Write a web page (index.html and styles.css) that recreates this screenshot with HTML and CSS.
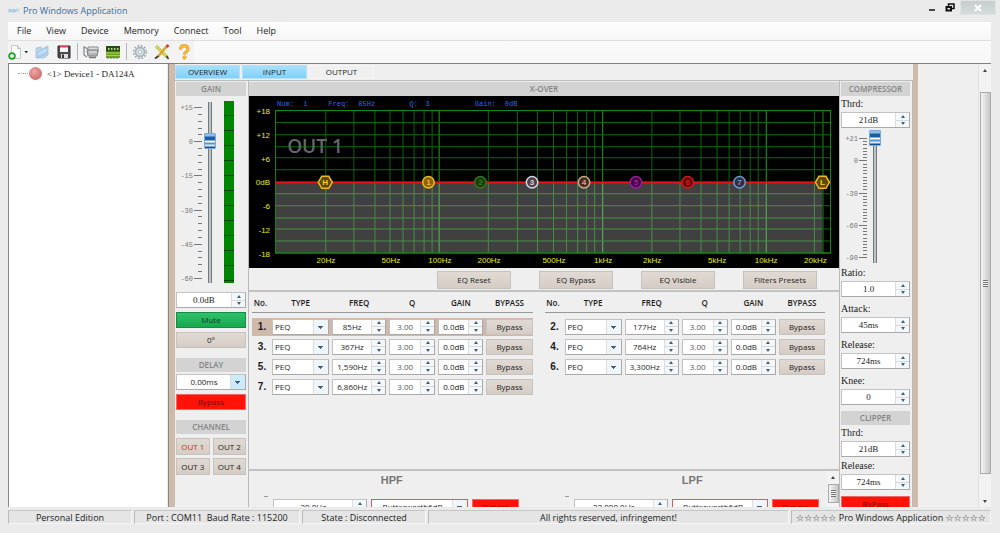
FILE: index.html
```html
<!DOCTYPE html>
<html lang="en">
<head>
<meta charset="utf-8">
<title>Pro Windows Application</title>
<link rel="stylesheet" href="styles.css">
</head>
<body>
<header class="titlebar">
  <svg class="logo" viewBox="0 0 12 8" width="12" height="8"><path d="M1 2.500h2v2.500H1zM4.500 2.500h2v2.500h-2zM7 5l1.500-3L10 5M10.500 2h1" fill="none" stroke="#8fc3de"/></svg>
  <h1>Pro Windows Application</h1>
  <div class="win-buttons">
    <button class="win" aria-label="Minimize"><svg viewBox="0 0 10 10" width="10" height="10"><path d="M2 7h6" stroke="#111" stroke-width="1.500"/></svg></button>
    <button class="win" aria-label="Restore"><svg viewBox="0 0 10 10" width="10" height="10"><path d="M3.500 3V1h5.500v4.500H7" fill="none" stroke="#111" stroke-width="1.500"/><path d="M1.500 4h4.500v3.500H1.500z" fill="none" stroke="#111" stroke-width="2"/></svg></button>
    <button class="win close" aria-label="Close"><svg viewBox="0 0 10 8" width="10" height="8"><path d="M2 1l6 6M8 1L2 7" stroke="#fff" stroke-width="2"/></svg></button>
  </div>
</header>
<div class="frame">
  <nav class="menubar">
    <button>File</button><button>View</button><button>Device</button><button>Memory</button><button>Connect</button><button>Tool</button><button>Help</button>
  </nav>
  <div class="toolbar">
    <div class="tools">
      <button aria-label="New"><svg viewBox="0 0 20 16" width="20" height="16"><path d="M3.500 1.500h6l3 3v10h-9z" fill="#fff" stroke="#c3c8c8"/><path d="M9.500 1.500v3h3" fill="#e3e8e8" stroke="#b5baba"/><circle cx="4" cy="12" r="3.500" fill="#2fae34" stroke="#168a1c" stroke-width=".6"/><path d="M4 10v4M2 12h4" stroke="#fff" stroke-width="1.300"/><path d="M16.500 7h3.500l-1.750 2.300z" fill="#222"/></svg></button>
      <button aria-label="Open"><svg viewBox="0 0 16 16" width="16" height="16"><path d="M2 4l5-1 1 2 4-2 2-1v9l-4 3H2z" fill="#b9d4ea" stroke="#a1b8cb" stroke-width=".7"/><path d="M4 7l10-4-2 8-9 3.500z" fill="#a3cbec"/><path d="M5 8l8-4-1 4-8 4z" fill="#c0dff6"/></svg></button>
      <button aria-label="Save"><svg viewBox="0 0 16 16" width="16" height="16"><path d="M2 2h12v12H3l-1-1z" fill="#4b4b50" stroke="#2e2e33"/><path d="M4 2h8v6H4z" fill="#f5f5f5"/><path d="M4 2h8v1.500H4z" fill="#df4b4b"/><path d="M5 10h7v4H5z" fill="#ddd"/><path d="M6 10.500h2V14H6z" fill="#333"/></svg></button>
      <i class="sep"></i>
      <button aria-label="Print"><svg viewBox="0 0 16 16" width="16" height="16"><path d="M1 2v9l3 2M1 3l4 2" fill="none" stroke="#888" stroke-width="1.200"/><path d="M5 3h10v5H5z" fill="#d9dcdc" stroke="#8b8f8f"/><path d="M4 6h11l-1 6H5z" fill="#b3b7b7" stroke="#7c8080"/><path d="M6 13.500h7" stroke="#777" stroke-width="1.500"/><path d="M6 8h8" stroke="#eee"/></svg></button>
      <button aria-label="Device board"><svg viewBox="0 0 16 16" width="16" height="16"><path d="M1 2h14v12H1z" fill="#6f9f2c"/><path d="M1 2h14v5.500H1z" fill="#244d16"/><path d="M3 4h1.500v2H3zM6 4h1.500v2H6zM9 4h1.500v2H9zM12 4h1.500v2H12z" fill="#b8d477"/><path d="M1 9h14M1 11.500h14" stroke="#a9cf4a"/><path d="M3 13v2M6 13v2M9 13v2M12 13v2" stroke="#6b7434"/></svg></button>
      <i class="sep"></i>
      <button aria-label="Settings"><svg viewBox="0 0 16 16" width="16" height="16"><circle cx="8" cy="8" r="6.400" fill="none" stroke="#9baab0" stroke-width="1.600" stroke-dasharray="1.700 1.650"/><circle cx="8" cy="8" r="4.500" fill="#e3e9eb" stroke="#a7b4b9" stroke-width="1.800"/><circle cx="8" cy="8" r="1.900" fill="#fafafa" stroke="#98a6ab" stroke-width=".8"/></svg></button>
      <button aria-label="Design"><svg viewBox="0 0 16 16" width="16" height="16"><path d="M2 2l11.500 11.500" stroke="#a9b02a" stroke-width="3"/><path d="M2 2l11.500 11.500" stroke="#e8e65f" stroke-width="1.400"/><path d="M13 2L4 12.500" stroke="#e0a626" stroke-width="2.600"/><path d="M14.500 1l-2 2" stroke="#cf3d36" stroke-width="2.600"/><path d="M4.500 12L1 14.500" stroke="#39302c" stroke-width="1.600"/><path d="M12.500 12l2 3" stroke="#38352b" stroke-width="1.400"/></svg></button>
      <button aria-label="Help"><svg viewBox="0 0 16 16" width="16" height="16"><path d="M4.500 5.500C4.500 2.500 6 1.800 8 1.800s4 1 4 3.200-1.500 2.800-2.500 3.500-1 1-1 2" fill="none" stroke="#d9921a" stroke-width="3"/><path d="M4.500 5.300C4.500 2.500 6 1.800 8 1.800s4 1 4 3.200-1.500 2.800-2.500 3.500-1 1-1 2" fill="none" stroke="#fdc12f" stroke-width="1.800"/><circle cx="8.500" cy="13.500" r="1.700" fill="#fdc12f" stroke="#d9921a" stroke-width=".6"/></svg></button>
    </div>
  </div>
  <div class="workspace">
    <aside class="tree">
      <div class="node"><i class="branch"></i><i class="dot"></i><span>&lt;1&gt; Device1 - DA124A</span></div>
    </aside>
    <main class="main">
      <i class="edge wide"></i>
      <div class="content">
        <div class="tabs" role="tablist">
          <button role="tab" class="tab on">OVERVIEW</button><button role="tab" class="tab on">INPUT</button><button role="tab" class="tab">OUTPUT</button>
        </div>
        <div class="columns">
          <section class="gain">
            <h2>GAIN</h2>
            <div class="fader">
              <svg class="scale" id="gain-scale" viewBox="0 0 27 190" width="27" height="190"></svg>
              <input class="slider" type="range" min="-60" max="15" value="0" aria-label="Gain">
              <div class="meter"></div>
            </div>
            <div class="spin"><input value="0.0dB" class="mono" aria-label="Gain value"><span><button aria-label="Up"></button><button aria-label="Down"></button></span></div>
            <button class="btn green">Mute</button>
            <button class="btn">0°</button>
            <h2 class="spaced">DELAY</h2>
            <div class="drop hot"><select aria-label="Delay"><option>0.00ms</option></select></div>
            <button class="btn red">Bypass</button>
            <h2 class="spaced">CHANNEL</h2>
            <div class="outs"><button class="btn active">OUT 1</button><button class="btn">OUT 2</button><button class="btn">OUT 3</button><button class="btn">OUT 4</button></div>
          </section>
          <section class="xover">
            <h2>X-OVER</h2>
            <svg class="graph" id="graph" viewBox="249 96 588 171"></svg>
            <div class="actions"><button class="btn">EQ Reset</button><button class="btn">EQ Bypass</button><button class="btn">EQ Visible</button><button class="btn">Filters Presets</button></div>
            <div class="eq"><div class="bands" id="odd"></div><div class="bands" id="even"></div></div>
            <div class="filters">
              <div class="filter"><h3>HPF</h3><div class="filter-row"><div class="spin"><input value="20.0Hz" aria-label="HPF frequency"><span><button aria-label="Up"></button><button aria-label="Down"></button></span></div><div class="drop alert"><select aria-label="HPF slope"><option>Butterworth6dB</option></select></div><button class="btn red">Bypass</button></div></div>
              <div class="filter"><h3>LPF</h3><div class="filter-row"><div class="spin"><input value="22,000.0Hz" aria-label="LPF frequency"><span><button aria-label="Up"></button><button aria-label="Down"></button></span></div><div class="drop alert"><select aria-label="LPF slope"><option>Butterworth6dB</option></select></div><button class="btn red">Bypass</button></div></div>
              <div class="mini-scroll"><i class="up"></i><b></b></div>
            </div>
          </section>
          <section class="dyn">
            <h2>COMPRESSOR</h2>
            <label for="c1">Thrd:</label>
            <div class="spin"><input id="c1" class="mono" value="21dB"><span><button aria-label="Up"></button><button aria-label="Down"></button></span></div>
            <div class="fader short">
              <svg class="scale" id="comp-scale" viewBox="0 0 27 138" width="27" height="138"></svg>
              <input class="slider" type="range" min="-90" max="21" value="21" aria-label="Threshold">
            </div>
            <label for="c2">Ratio:</label>
            <div class="spin gap"><input id="c2" class="mono" value="1.0"><span><button aria-label="Up"></button><button aria-label="Down"></button></span></div>
            <label for="c3">Attack:</label>
            <div class="spin gap"><input id="c3" class="mono" value="45ms"><span><button aria-label="Up"></button><button aria-label="Down"></button></span></div>
            <label for="c4">Release:</label>
            <div class="spin gap"><input id="c4" class="mono" value="724ms"><span><button aria-label="Up"></button><button aria-label="Down"></button></span></div>
            <label for="c5">Knee:</label>
            <div class="spin gap"><input id="c5" class="mono" value="0"><span><button aria-label="Up"></button><button aria-label="Down"></button></span></div>
            <h2>CLIPPER</h2>
            <label for="c6">Thrd:</label>
            <div class="spin"><input id="c6" class="mono" value="21dB"><span><button aria-label="Up"></button><button aria-label="Down"></button></span></div>
            <label for="c7" class="tall">Release:</label>
            <div class="spin"><input id="c7" class="mono" value="724ms"><span><button aria-label="Up"></button><button aria-label="Down"></button></span></div>
            <button class="btn red last">ByPass</button>
          </section>
        </div>
      </div>
      <i class="edge"></i>
      <div class="blank"></div>
      <div class="scrollbar"><i class="up"></i><b></b><i class="down"></i></div>
    </main>
  </div>
</div>
<footer class="status">
  <span class="s1">Personal Edition</span><span class="s2">Port : COM11&nbsp; Baud Rate : 115200</span><span class="s3">State : Disconnected</span><span class="s4">All rights reserved, infringement!</span><span class="s5">☆☆☆☆☆ Pro Windows Application ☆☆☆☆☆</span>
</footer>
<script src="app.js"></script>
</body>
</html>
```
FILE: styles.css
```css
* { box-sizing: border-box; }
html, body { height: 100%; }
body { margin: 0; display: flex; flex-direction: column; background: #ebebeb; color: #1c1c1c; font: 8px/12px "Open Sans", "DejaVu Sans", sans-serif; overflow: hidden; }
button, input, select { font: inherit; color: inherit; margin: 0; padding: 0; border: 0; border-radius: 0; background: none; min-width: 0; }
h1, h2, h3 { margin: 0; font: inherit; }
svg { display: block; flex: none; }

.titlebar { display: flex; align-items: center; height: 22px; flex: none; padding-left: 8px; gap: 3px; }
.titlebar h1 { font-size: 9px; color: #3b6f98; flex: 1; }
.win-buttons { display: flex; align-self: flex-start; align-items: center; padding-right: 4px; }
.win { width: 18px; height: 15px; display: grid; place-items: center; }
.win.close { width: 36px; margin-left: 1px; background: linear-gradient(#c7cecd, #d3dddb); border: 1px solid #dfe3e3; }

.frame { flex: 1; min-height: 0; margin: 0 9px 0 8px; display: flex; flex-direction: column; }
.menubar { display: flex; height: 19px; padding-left: 9px; gap: 15px; flex: none; background: linear-gradient(#fff, #f6f6f6); border-bottom: 1px solid #e0e0e0; font-size: 9px; align-items: center; }
.toolbar { height: 23px; flex: none; background: linear-gradient(#fafafa, #f7f7f7); border-bottom: 1px solid #808080; }
.tools { display: flex; align-items: center; gap: 6px; height: 21px; width: max-content; background: #f3f3f3; padding-right: 2px; }
.sep { width: 1px; height: 17px; background: #b5b5b5; margin: 0 -1px; }

.workspace { flex: 1; min-height: 0; display: flex; }
.tree { width: 159px; flex: none; background: #fff; border: 1px solid #888; border-width: 0 0 0 1px; margin-right: 1px; }
.node { display: flex; align-items: center; gap: 1px; padding: 3px 0 0 9px; font: 9px/12px "Liberation Serif", serif; }
.branch { width: 10px; border-top: 1px dotted #999; }
.dot { width: 13px; height: 13px; border-radius: 50%; background: radial-gradient(circle at 40% 35%, #efa7a5, #cf7170 70%, #c88); margin-right: 4px; }
.main { flex: 1; min-width: 0; display: flex; background: #efefef; border-left: 1px solid #888; overflow: hidden; }
.edge { width: 5px; flex: none; background: #cfbaab; }
.edge.wide { width: 6px; }
.content { flex: 1; min-width: 0; display: flex; flex-direction: column; }
.blank { width: 60px; flex: none; }

.scrollbar { width: 13px; flex: none; display: flex; flex-direction: column; align-items: center; border-left: 1px solid #e0e0e0; padding: 5px 0 4px; background: #f2f2f2; }
.scrollbar b, .mini-scroll b { width: 11px; border: 1px solid #aaa; background: linear-gradient(90deg, #f5f5f5, #c6c6c6); display: grid; place-items: center; }
.scrollbar b { flex: 1; margin: 20px 0 26px; }
.scrollbar b::after, .mini-scroll b::after { content: ""; width: 5px; height: 7px; background: repeating-linear-gradient(#777 0 1px, #eee 1px 2px); }
.up, .down { border: 2px solid transparent; border-bottom: 3px solid #444; border-top: 0; width: 4px; flex: none; }
.down { border-top: 3px solid #444; border-bottom: 0; }

.tabs { display: flex; gap: 2px; height: 17px; flex: none; padding: 1px 0; border-bottom: 1px solid #bbb; }
.tab { width: 65px; border: 1px solid #f5f5f5; background: #f0f0f0; line-height: 12px; }
.tab.on { background: linear-gradient(#a9e0fc, #80d1f9); border-color: #b9dff2; }

.columns { flex: 1; min-height: 0; display: grid; grid-template-columns: 73px minmax(0, 1fr) 73px; }
.columns > section { min-width: 0; min-height: 0; padding-top: 1px; overflow: hidden; }
h2 { background: #d3d3d3; color: #858585; font-weight: 600; text-align: center; height: 14px; line-height: 14px; flex: none; }
.gain { display: flex; flex-direction: column; padding: 0 2px 0 1px; }
.spaced { margin: 10px 0 -2px; }
.gain > .btn, .gain > .drop { margin-top: 4px; }
.fader { display: flex; height: 196px; padding-top: 3px; flex: none; }
.scale text { font: 7px "Liberation Mono", monospace; fill: #777; text-anchor: end; }
.scale path { stroke: #777; fill: none; }
.slider { appearance: none; writing-mode: vertical-lr; direction: rtl; width: 12px; height: 187px; margin-left: 1px; background: linear-gradient(90deg, #777 0 1px, #b6c6c9 1px 3px, #777 3px) center / 4px 181px no-repeat; flex: none; }
.slider::-webkit-slider-thumb { appearance: none; width: 12px; height: 16px; background: linear-gradient(#8fbfe9 0 2px, #1c5ca6 3px 6px, #fff 7px 8px, #5a92cb 9px 10px, #d8ebfa 11px 12px, #174f98 13px); border: 1px solid #79a9da; border-radius: 1px; }
.meter { width: 10px; height: 182px; margin: 2px 0 0 8px; background: repeating-linear-gradient(#008500 0 14px, #004500 14px 15px); }
.fader.short { height: 137px; padding-top: 2px; }
.short .slider { height: 135px; background-size: 4px 131px; }

.spin, .drop { display: flex; height: 16px; flex: none; background: #fff; border: 1px solid #c2c2c2; border-right-color: #a9a9a9; border-bottom-color: #a9a9a9; min-width: 0; }
.spin input { flex: 1; width: 0; text-align: center; line-height: 14px; }
.spin .mono { font-family: "Liberation Serif", serif; font-size: 9px; }
.spin > span { width: 14px; display: flex; flex-direction: column; border-left: 1px solid #ddd; background: #f5f8fa; }
.spin button { flex: 1; display: grid; place-items: center; }
.spin button + button { border-top: 1px solid #d8d8d8; }
.spin button::after { content: ""; border: 2px solid transparent; border-top: 0; border-bottom: 3px solid #3f5f7c; }
.spin button + button::after { border-top: 3px solid #3f5f7c; border-bottom: 0; }
.drop { position: relative; }
.drop select { appearance: none; width: 100%; padding: 0 16px 0 2px; outline: 0; line-height: 12px; }
.drop::after { content: ""; position: absolute; inset: 0 0 0 auto; width: 14px; border-left: 1px solid #ddd; pointer-events: none; background-color: #eff5f8; background-image: linear-gradient(#3f5f7c, #3f5f7c), linear-gradient(#3f5f7c, #3f5f7c), linear-gradient(#3f5f7c, #3f5f7c); background-size: 5px 1px, 3px 1px, 1px 1px; background-position: 4px 6px, 5px 7px, 6px 8px; background-repeat: no-repeat; }
.drop.hot::after { background-color: #cdeafb; }
.drop.hot select { text-align: center; padding: 0 14px 0 0; }
.drop.alert { border: 1px solid #e05858; }
.drop.alert select { text-align: center; }

.btn { height: 16px; flex: none; background: linear-gradient(#e1dad4, #d5cdc5); border: 1px solid #f8f8f8; outline: 1px solid #c6c2be; outline-offset: -1px; line-height: 14px; }
.green { background: linear-gradient(#2fc06b, #17a84e); outline-color: #168c46; color: #0e4022; }
.red { background: #ff1208; outline-color: #e66; color: #7e0700; }
.outs { display: grid; grid-template-columns: 1fr 1fr; gap: 3px; margin-top: 6px; }
.outs .btn { height: 17px; }
.active { color: #e01c1c; }

.xover { display: flex; flex-direction: column; border-left: 1px solid #bbb; border-right: 1px solid #bbb; }
.graph { width: 100%; background: #000; font: 8px "Liberation Sans", sans-serif; flex: none; }
.actions { display: flex; height: 24px; flex: none; align-items: center; justify-content: flex-end; gap: 28px; padding: 2px 22px 0 0; border-bottom: 2px solid #c2c2c2; }
.actions .btn { width: 74px; height: 18px; }
.eq { display: grid; grid-template-columns: 1fr 1fr; gap: 12px; flex: 1; min-height: 0; padding: 3px 14px 0 3px; }
.band { display: grid; grid-template-columns: 17px 57fr 54fr 46fr 45fr 46fr; gap: 3px; height: 18px; align-items: center; margin-bottom: 2px; }
.band.head { font-weight: 600; text-align: center; border-bottom: 1px solid #999; margin-bottom: 5px; }
.band b { font: bold 10px/16px "Liberation Sans", sans-serif; text-align: center; padding-left: 3px; }
.band.sel { background: #cfb9aa; }
.spin .q { color: #555; }
.filters { position: relative; display: grid; grid-template-columns: 1fr 1fr; gap: 55px; height: 38px; flex: none; padding: 2px 20px 0 24px; border-top: 2px solid #c2c2c2; overflow: hidden; }
.filter h3 { font: bold 11px/14px "Liberation Sans", sans-serif; color: #777; text-align: center; padding-right: 8px; }
.filter-row { display: grid; grid-template-columns: 95fr 97fr 47fr; gap: 4px; margin-top: 12px; }
.filter-row::before { content: ""; position: absolute; width: 4px; height: 1px; background: #999; margin: -3px 0 0 -9px; }
.mini-scroll { position: absolute; inset: 0 0 0 auto; width: 12px; display: flex; flex-direction: column; align-items: center; gap: 5px; padding-top: 5px; background: #f3f3f3; }
.mini-scroll b { height: 19px; }

.dyn { display: flex; flex-direction: column; padding: 0 2px 0 1px; border-right: 1px solid #bbb; }
.dyn label { font: 10px/16px "Liberation Serif", serif; height: 16px; flex: none; }
.dyn .gap { margin-bottom: 4px; }
.dyn .gap + h2 { margin: 2px 0 0; }
.dyn .last { margin-top: 6px; }
.dyn label.tall { margin-top: 1px; }

.status { display: flex; flex: none; gap: 2px; margin: 2px 9px 0 8px; padding: 1px 0 9px; }
.status span { height: 14px; line-height: 13px; text-align: center; border: 1px solid #f6f6f6; border-top-color: #c6c6c6; border-left-color: #bbb; background: #e5e5e5; white-space: nowrap; overflow: hidden; font-size: 9px; }
.s1 { width: 124px; } .s2 { width: 166px; } .s3 { width: 124px; } .s4 { flex: 1; } .s5 { width: 200px; }
```
FILE: app.js
```js
const fx = f => 439.3 + 162.6 * (Math.log10(f) - 2);
const dy = db => 182 - db * 71 / 18;
const line = (x1, y1, x2, y2, c, w = 1) => `<line x1="${x1}" y1="${y1}" x2="${x2}" y2="${y2}" stroke="${c}" stroke-width="${w}"/>`;
const text = (x, y, s, attrs) => `<text x="${x}" y="${y}" ${attrs}>${s}</text>`;

let g = '';
for (let d = 10; d <= 10000; d *= 10) {
  for (let m = 1; m < 10; m++) {
    const f = d * m;
    if (f < 20 || f > 20000) continue;
    const x = Math.round(fx(f)) - 0.5;
    g += line(x, 111, x, 253, m === 1 ? '#22a022' : '#0c640c');
  }
}
g += line(821, 111, 821, 253, '#0a4a0a', 2);
for (let db = -18; db <= 18; db += 3) {
  const y = Math.round(dy(db)) - 0.5;
  g += line(275, y, 829, y, Math.abs(db) === 18 ? '#0e8a0e' : '#0c680c');
}
g += `<rect x="275.5" y="182" width="544.5" height="70" fill="#fff" fill-opacity=".25"/>`;
g += `<rect x="275.5" y="110.5" width="553" height="142" fill="none" stroke="#128a12"/>`;
g += line(275, 182.5, 829, 182.5, '#e01414', 1.5);
[18, 12, 6, 0, -6, -12, -18].forEach(v => {
  g += text(270, dy(v) + 3, v > 0 ? '+' + v : v === 0 ? '0dB' : v, 'fill="#e8e81c" text-anchor="end"');
});
[[20, '20Hz'], [50, '50Hz'], [100, '100Hz'], [200, '200Hz'], [500, '500Hz'], [1000, '1kHz'], [2000, '2kHz'], [5000, '5kHz'], [10000, '10kHz'], [20000, '20kHz']].forEach(([f, s]) => {
  g += text(fx(f), 262, s, 'fill="#e8e81c" text-anchor="middle"');
});
[[277, 'Num:'], [303, '1'], [328, 'Freq:'], [358, '85Hz'], [409, 'Q:'], [425, '3'], [474, 'Gain:'], [504, '0dB']].forEach(([x, s]) => {
  g += text(x, 106, s, 'fill="#2d6aee" font-family="Liberation Mono" font-size="7"');
});
g += text(287, 153, 'OUT 1', 'fill="#666" font-family="Open Sans" font-weight="600" font-size="19"');
[[325, 'H'], [820.5, 'L']].forEach(([x, s]) => {
  g += `<path d="M${x - 7} 182l3.500-6h7l3.500 6-3.500 6h-7z" fill="#5d4a08" stroke="#f0b91c" stroke-width="1.500"/>`;
  g += text(x, 185, s, 'fill="#f5d224" font-weight="bold" text-anchor="middle"');
});
[[85, '#f5b81a', '#8a6206'], [177, '#2f7a14', '#1f3a12'], [367, '#cdd6e6', '#5a3a44'], [764, '#c4ab8c', '#4a2a20'], [1590, '#a514a5', '#3a103a'], [3300, '#e01414', '#5a0c0c'], [6860, '#6d9bd2', '#352c42']].forEach(([f, c, bg], i) => {
  const x = fx(f);
  g += `<circle cx="${x}" cy="182" r="5.700" fill="${bg}" stroke="${c}" stroke-width="1.500"/>`;
  g += text(x, 185, i + 1, `fill="${c}" font-weight="bold" text-anchor="middle"`);
});
document.getElementById('graph').innerHTML = g;

function scale(id, max, min, step, labels, top, perDb) {
  let s = '';
  for (let v = max; v >= min; v -= step) {
    const y = Math.round(top + (max - v) * perDb) + 0.5;
    const major = labels.includes(v);
    s += `<path d="M${major ? 18 : 22} ${y}h${major ? 8 : 4}"/>`;
    if (major) s += text(17, y + 2, v > 0 ? '+' + v : v, '');
  }
  document.getElementById(id).innerHTML = s;
}
scale('gain-scale', 15, -60, 3, [15, 0, -15, -30, -45, -60], 8, 2.28);
scale('comp-scale', 21, -90, 3, [21, 0, -30, -60, -90], 8, 1.07);

const spin = (v, name, cls = '') => `<div class="spin"><input class="${cls}" value="${v}" aria-label="${name}"><span><button aria-label="Up"></button><button aria-label="Down"></button></span></div>`;
const head = '<div class="band head"><span>No.</span><span>TYPE</span><span>FREQ</span><span>Q</span><span>GAIN</span><span>BYPASS</span></div>';
const bands = ['85Hz', '177Hz', '367Hz', '764Hz', '1,590Hz', '3,300Hz', '6,860Hz'];
const cols = [head, head];
bands.forEach((f, i) => {
  cols[i % 2] += `<div class="band${i ? '' : ' sel'}"><b>${i + 1}.</b><div class="drop"><select aria-label="Type ${i + 1}"><option>PEQ</option></select></div>${spin(f, 'Frequency')}${spin('3.00', 'Q', 'q')}${spin('0.0dB', 'Gain')}<button class="btn">Bypass</button></div>`;
});
document.getElementById('odd').innerHTML = cols[0];
document.getElementById('even').innerHTML = cols[1];
```
